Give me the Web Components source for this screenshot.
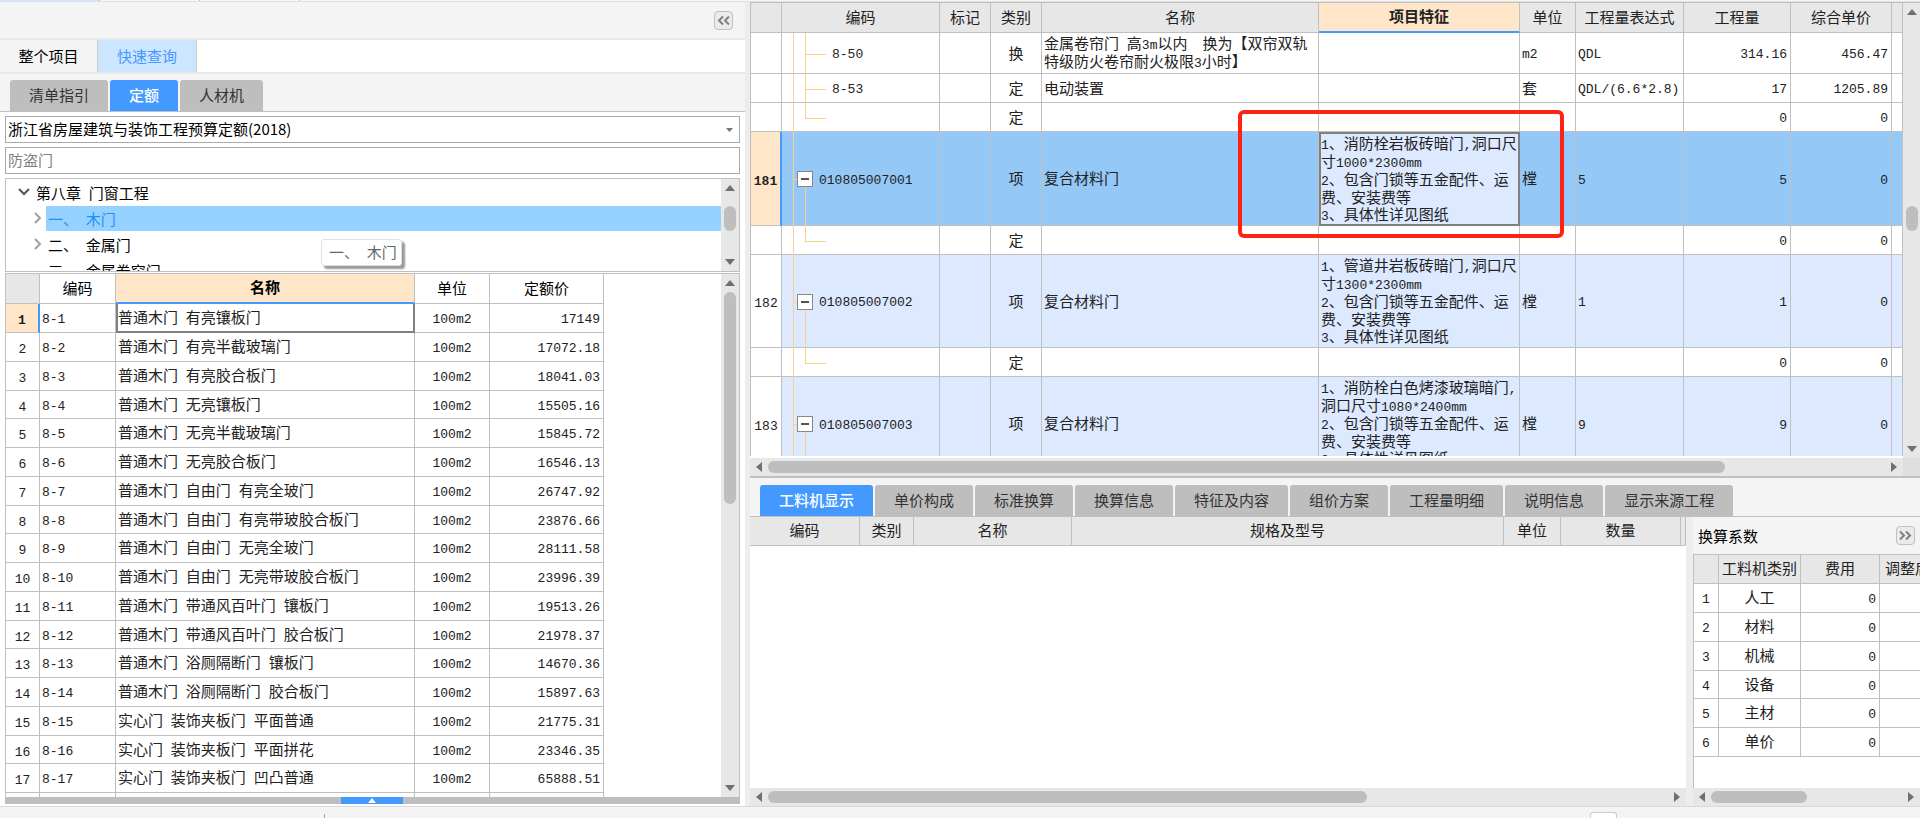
<!DOCTYPE html>
<html lang="zh-CN">
<head>
<meta charset="utf-8">
<title>预算编制</title>
<style>
html,body{margin:0;height:100%}
body{font:15px/20px "Noto Sans CJK SC",sans-serif;color:#222;background:#f4f4f4;overflow:hidden;
--line:#c0c0c0;--blue:#4499ff;--peach:#ffe6c8;--head:#e7e7e7;--panel:#f4f4f4;--mono:"Liberation Mono","Noto Sans CJK SC",monospace}
</style>
</head>
<body>
<budget-app></budget-app>
<script>
const define = (name, css, html, setup) => {
  const tpl = document.createElement('template');
  tpl.innerHTML = `<style>*{box-sizing:border-box}${css}</style>${html}`;
  customElements.define(name, class extends HTMLElement {
    constructor() {
      super();
      this.attachShadow({mode: 'open'}).append(tpl.content.cloneNode(true));
    }
    connectedCallback() {
      if (setup && !this.ready) { this.ready = true; setup(this, this.shadowRoot); }
    }
  });
};

// Half-width characters are set in the monospaced face.
const mix = t => String(t).replace(/[\x20-\x7e]+/g, m => `<span class="a">${m}</span>`);
const MONO = '.a{font-family:var(--mono);font-size:13px;line-height:13px;white-space:pre}';

define('scroll-bar', `
:host{display:flex;flex:none;background:var(--head);width:18px;flex-direction:column;align-items:center;justify-content:space-between}
:host([horizontal]){width:auto;height:18px;flex-direction:row}
svg{display:block;flex:none;width:18px;height:18px;fill:#6e6e78}
.track{flex:1;width:12px}
.thumb{width:12px;height:var(--len);margin-top:var(--at,0);background:#bebebe;border-radius:6px}
:host([horizontal]) .track{width:auto;height:12px}
:host([horizontal]) .thumb{width:var(--len);max-width:100%;height:12px;margin:0 0 0 var(--at,0)}
:host([horizontal]) svg{transform:rotate(-90deg)}
`, `<svg viewBox="0 0 18 18"><path d="M4 12L9 6l5 6z"/></svg><div class="track"><div class="thumb"></div></div><svg viewBox="0 0 18 18"><path d="M4 6l5 6 5-6z"/></svg>`);

define('fold-button', `
:host{display:block;flex:none}
button{display:block;width:19px;height:19px;padding:0;border:1px solid #c0c0c0;border-radius:4px;background:#ebebeb}
svg{display:block;width:17px;height:17px;fill:none;stroke:#808080;stroke-width:2}
:host([right]) svg{transform:scaleX(-1)}
`, `<button type="button" aria-label="折叠"><svg viewBox="0 0 17 17"><path d="M8 4.500L4 8.500l4 4M14 4.500l-4 4 4 4"/></svg></button>`);

define('tab-strip', `
:host{display:flex;gap:2px;padding:0 10px;border-bottom:1px solid var(--line);background:var(--panel)}
button{font:inherit;height:31px;padding:0 19px 2px;border:0;border-radius:3px 3px 0 0;background:#bebebe;color:#333;white-space:nowrap}
button.on{background:var(--blue);color:#fff;font-weight:500}
`, ``, (el, root) => {
  el.getAttribute('tabs').split(',').forEach((t, i) => {
    const b = document.createElement('button');
    b.type = 'button'; b.textContent = t;
    if (i == el.getAttribute('active')) b.className = 'on';
    root.append(b);
  });
});

define('tree-view', `
:host{display:flex;height:94px;border:1px solid var(--line);background:#fff;color:#000}
ul{list-style:none;margin:0;padding:0;flex:1;overflow:hidden}
li{display:flex;align-items:center;gap:2px;height:26px;padding-left:26px}
li.root{gap:4px;padding-left:12px}
svg{width:12px;height:12px;flex:none;fill:none;stroke:#a0a0a0;stroke-width:2}
.root svg{stroke:#555}
span.t{flex:1;height:25px;line-height:25px;padding-left:2px;white-space:pre}
li.on span.t{background:#96d2ff;color:#1a90ff}
.tip{position:absolute;left:321px;top:239px;width:81px;height:27px;line-height:24px;padding-left:7px;background:#fff;color:#666;border:1px solid #e0e0e0;border-radius:3px;box-shadow:3px 3px 2px #999}
scroll-bar{--at:9px;--len:25px}
${MONO}`, `<ul>
<li class="root"><svg viewBox="0 0 12 12"><path d="M1 3l5 5 5-5"/></svg><span class="t">${mix('第八章 门窗工程')}</span></li>
<li class="on"><svg viewBox="0 0 12 12"><path d="M3 1l5 5-5 5"/></svg><span class="t">${mix('一、 木门')}</span></li>
<li><svg viewBox="0 0 12 12"><path d="M3 1l5 5-5 5"/></svg><span class="t">${mix('二、 金属门')}</span></li>
<li><svg viewBox="0 0 12 12"></svg><span class="t">${mix('三、 金属卷帘门')}</span></li>
</ul><scroll-bar></scroll-bar><div class="tip" role="tooltip">${mix('一、 木门')}</div>`);

const TABLE = `
table{border-collapse:separate;border-spacing:0;table-layout:fixed}
th,td{padding:0 2px 2px;border:0 solid var(--line);border-width:0 1px 1px 0;font-weight:400;text-align:left;white-space:nowrap;overflow:hidden}
th{background:var(--head);text-align:center}
.c{text-align:center}.r{text-align:right;padding-right:3px}
${MONO}`;

const quota = [['普通木门 有亮镶板门','17149'],['普通木门 有亮半截玻璃门','17072.18'],['普通木门 有亮胶合板门','18041.03'],['普通木门 无亮镶板门','15505.16'],['普通木门 无亮半截玻璃门','15845.72'],['普通木门 无亮胶合板门','16546.13'],['普通木门 自由门 有亮全玻门','26747.92'],['普通木门 自由门 有亮带玻胶合板门','23876.66'],['普通木门 自由门 无亮全玻门','28111.58'],['普通木门 自由门 无亮带玻胶合板门','23996.39'],['普通木门 带通风百叶门 镶板门','19513.26'],['普通木门 带通风百叶门 胶合板门','21978.37'],['普通木门 浴厕隔断门 镶板门','14670.36'],['普通木门 浴厕隔断门 胶合板门','15897.63'],['实心门 装饰夹板门 平面普通','21775.31'],['实心门 装饰夹板门 平面拼花','23346.35'],['实心门 装饰夹板门 凹凸普通','65888.51']];

define('quota-table', `
:host{display:flex;flex:1;min-height:0;border:1px solid var(--line);border-bottom:0;background:#fff}
.view{flex:1;overflow:hidden}
${TABLE}
table{width:598px}
tr{height:29px}
tbody tr:nth-child(4n){height:28px}
thead tr{height:30px}
th{background:#fff;color:#000}
th.idx{background:var(--head)}
th.sel{background:var(--peach);font-weight:700;border-bottom:2px solid var(--blue)}
td:first-child{padding-bottom:0}
td.now{background:var(--peach);font-weight:700;border-right:2px solid var(--blue)}
td.focus{border:2px solid #808080;border-top:0;padding-left:0}
scroll-bar{--len:212px}
`, `<div class="view"><table><colgroup><col style="width:34px"><col style="width:76px"><col style="width:299px"><col style="width:75px"><col style="width:114px"></colgroup>
<thead><tr><th class="idx"></th><th>编码</th><th class="sel">名称</th><th>单位</th><th>定额价</th></tr></thead><tbody>
${quota.map(([n,p],i)=>`<tr><td class="c${i?'':' now'}">${mix(i+1)}</td><td>${mix('8-'+(i+1))}</td><td${i?'':' class="focus"'}>${mix(n)}</td><td class="c">${mix('100m2')}</td><td class="r">${mix(p)}</td></tr>`).join('')}
<tr><td></td><td></td><td></td><td></td><td></td></tr></tbody></table></div><scroll-bar></scroll-bar>`);

define('query-panel', `
:host{display:flex;flex-direction:column;min-width:0;min-height:0;background:#fff}
header{display:flex;justify-content:flex-end;align-items:center;height:36px;padding:0 12px 0 0;background:var(--panel)}
nav{display:flex;height:36px;border:solid #e7e7e7;border-width:2px 0;background:#fff}
nav button{font:inherit;width:98px;padding:0;border:0;border-right:1px solid #ccc;background:var(--panel);color:#000}
nav button.on{width:99px;background:#cce6ff;color:var(--blue)}
tab-strip{padding-top:6px}
.body{display:flex;flex-direction:column;flex:1;min-height:0;gap:4px;padding:4px 5px 0}
.pick{display:grid}
select,input{grid-area:1/1;appearance:none;font:inherit;width:100%;height:27px;padding:0 2px 2px;margin:0;border:1px solid #aaa;border-radius:0;background:#fff;color:#000;outline:0}
input{color:#808080}
.pick svg{grid-area:1/1;place-self:center end;width:20px;height:6px;fill:#777;pointer-events:none}
.lists{display:flex;flex-direction:column;flex:1;min-height:0;gap:1px}
.drawer{height:7px;margin:0 5px 2px;background:#bebebe}
.drawer button{display:block;width:62px;height:7px;margin-left:336px;padding:0;border:0;background:var(--blue)}
.drawer svg{display:block;margin:auto;width:8px;height:5px;fill:#fff}
`, `<header><fold-button></fold-button></header>
<nav><button type="button">整个项目</button><button type="button" class="on">快速查询</button></nav>
<tab-strip tabs="清单指引,定额,人材机" active="1"></tab-strip>
<div class="body"><div class="pick"><select aria-label="定额库"><option>浙江省房屋建筑与装饰工程预算定额(2018)</option></select><svg viewBox="0 0 20 6"><path d="M6 1h7L9.500 5z"/></svg></div>
<input type="text" aria-label="搜索" value="防盗门">
<div class="lists"><tree-view></tree-view><quota-table></quota-table></div></div>
<div class="drawer"><button type="button" aria-label="展开"><svg viewBox="0 0 8 5"><path d="M0 5L4 0l4 5z"/></svg></button></div>`);

// Tree guides of the code column: outer rail, inner rail and the branch of one row.
define('tree-mark', `
:host{position:absolute;inset:0 0 -1px;pointer-events:none}
i{position:absolute;background:#ffcf8c}
.rail{left:11px;top:0;bottom:0;width:1px}
.in{left:23px;top:0;bottom:0;width:1px}
.arm{left:23px;top:50%;width:21px;height:1px}
:host([kind=last]) .in{bottom:50%}
:host([kind=box]) .in{top:50%}
:host([kind=box]) .arm{left:11px;width:6px}
b{display:none;position:absolute;left:15px;top:calc(50% - 8px);width:16px;height:16px;border:1px solid #888;background:#fff}
b::after{content:"";position:absolute;left:3px;right:3px;top:6px;height:2px;background:#555}
:host([kind=box]) b{display:block}
`, `<i class="rail"></i><i class="in"></i><i class="arm"></i><b></b>`);

const tail = ['last','','','定','','','','','0','0'];
const tails = '2、包含门锁等五金配件、运\n费、安装费等\n3、具体性详见图纸';
const items = [
 ['mid','','8-50','换','金属卷帘门 高3m以内　换为【双帘双轨\n特级防火卷帘耐火极限3小时】','','m2','QDL','314.16','456.47',41],
 ['mid','','8-53','定','电动装置','','套','QDL/(6.6*2.8)','17','1205.89',29],
 [...tail,29],
 ['box','181','010805007001','项','复合材料门','1、消防栓岩板砖暗门,洞口尺\n寸1000*2300mm\n'+tails,'樘','5','5','0',94],
 [...tail,29],
 ['box','182','010805007002','项','复合材料门','1、管道井岩板砖暗门,洞口尺\n寸1300*2300mm\n'+tails,'樘','1','1','0',93],
 [...tail,29],
 ['box','183','010805007003','项','复合材料门','1、消防栓白色烤漆玻璃暗门,\n洞口尺寸1080*2400mm\n'+tails,'樘','9','9','0',94]];

define('bill-table', `
:host{display:grid;grid-template:minmax(0,1fr) 18px/minmax(0,1fr) 17px;background:#fff;border:solid var(--line);border-width:1px 0 2px}
.view{overflow:hidden;border-left:1px solid var(--line);margin-bottom:2px}
${TABLE}
table{width:100%}
thead tr{height:30px}
th.sel{background:var(--peach);font-weight:700;border-bottom:2px solid var(--blue)}
td{white-space:pre;line-height:17px}
td.idx{background:#fff;padding:0}
td.code{position:relative;padding-left:50px;overflow:visible}
tr.item td.code{padding-left:37px}
tr.item td:not(.idx){background:#dce9ff}
tr.cur td:not(.idx){background:#93c8f7}
tr.cur td.idx{background:var(--peach);font-weight:700;border-right:2px solid var(--blue)}
tr.cur td.feat{position:relative;overflow:visible;background:#dce9ff;border:2px solid #808080;padding:0 0 1px}
.mark{position:absolute;inset:-24px -46px -14px -83px;border:4px solid #ff2314;border-radius:6px;z-index:2;pointer-events:none}
.corner{background:#dedede}
.v{--at:185px;--len:25px;width:17px}.h{--len:957px}
`, `<div class="view"><table><colgroup><col style="width:31px"><col style="width:158px"><col style="width:51px"><col style="width:51px"><col><col style="width:201px"><col style="width:56px"><col style="width:108px"><col style="width:107px"><col style="width:101px"><col style="width:11px"></colgroup>
<thead><tr><th></th><th>编码</th><th>标记</th><th>类别</th><th>名称</th><th class="sel">项目特征</th><th>单位</th><th>工程量表达式</th><th>工程量</th><th>综合单价</th><th></th></tr></thead><tbody>
${items.map(r=>`<tr class="${r[1]?'item':''}${r[1]=='181'?' cur':''}" style="height:${r[10]}px"><td class="idx c">${mix(r[1])}</td><td class="code"><tree-mark kind="${r[0]}"></tree-mark>${mix(r[2])}</td><td></td><td class="c">${r[3]}</td><td>${mix(r[4])}</td><td class="feat">${mix(r[5])}${r[1]=='181'?'<div class="mark"></div>':''}</td><td>${mix(r[6])}</td><td>${mix(r[7])}</td><td class="r">${mix(r[8])}</td><td class="r">${mix(r[9])}</td><td></td></tr>`).join('')}
</tbody></table></div><scroll-bar class="v"></scroll-bar><scroll-bar class="h" horizontal></scroll-bar><div class="corner"></div>`);

define('resource-table', `
:host{display:flex;flex-direction:column;min-width:0;background:#fff}
.view{flex:1;overflow:hidden}
${TABLE}
table{width:100%}tr{height:29px}
scroll-bar{--len:599px}
`, `<div class="view"><table><colgroup><col style="width:110px"><col style="width:54px"><col style="width:158px"><col><col style="width:57px"><col style="width:120px"><col style="width:5px"></colgroup><thead><tr><th>编码</th><th>类别</th><th>名称</th><th>规格及型号</th><th>单位</th><th>数量</th><th></th></tr></thead></table></div><scroll-bar horizontal></scroll-bar>`);

define('factor-panel', `
:host{display:flex;flex-direction:column;min-width:0;background:#fff}
header{display:flex;align-items:center;justify-content:space-between;height:37px;padding:0 5px;color:#000;background:var(--panel)}
.view{flex:1;overflow:hidden;border:solid var(--line);border-width:1px 0 0 1px}
${TABLE}
table{width:272px}tr{height:29px}tbody tr:nth-child(4n){height:28px}
th:last-child{text-align:left;padding-left:5px}
scroll-bar{--len:96px}
`, `<header><span>换算系数</span><fold-button right></fold-button></header>
<div class="view"><table><colgroup><col style="width:25px"><col style="width:82px"><col style="width:79px"><col style="width:86px"></colgroup><thead><tr><th></th><th>工料机类别</th><th>费用</th><th>调整后费用</th></tr></thead><tbody>
${['人工','材料','机械','设备','主材','单价'].map((n,i)=>`<tr><td class="c">${mix(i+1)}</td><td class="c">${n}</td><td class="r">${mix('0')}</td><td></td></tr>`).join('')}</tbody></table></div><scroll-bar horizontal></scroll-bar>`);

define('budget-app', `
:host{display:flex;flex-direction:column;height:100vh}
.top{display:flex;height:2px;border-bottom:1px solid #e0e0e0;background:#f7f7f7}
.top i{width:100px;border-right:1px solid #bbb}.top i:first-child{background:#cce6ff}
main{flex:1;min-height:0;display:grid;grid-template-columns:745px minmax(0,1fr);column-gap:5px;background:#ededed}
.right{display:flex;flex-direction:column;min-width:0;min-height:0}
bill-table{flex:none;box-sizing:border-box;height:round(58.2vh,1px)}
bill-table+tab-strip{padding-top:7px}
.low{flex:1;min-height:0;display:grid;grid-template-columns:minmax(0,1fr) 227px;column-gap:7px;background:#ededed}
footer{display:flex;height:12px;border-top:1px solid #d9d9d9;background:var(--panel);align-items:flex-end;justify-content:space-between;padding:0 303px 0 324px}
footer i{width:1px;height:4px;background:#aaa}
footer b{width:27px;height:6px;border:1px solid #ccc;border-bottom:0;border-radius:3px 3px 0 0;background:#fff}
`, `<div class="top"><i></i><i></i><i></i></div>
<main><query-panel></query-panel><div class="right"><bill-table></bill-table>
<tab-strip tabs="工料机显示,单价构成,标准换算,换算信息,特征及内容,组价方案,工程量明细,说明信息,显示来源工程" active="0"></tab-strip>
<div class="low"><resource-table></resource-table><factor-panel></factor-panel></div></div></main>
<footer><i></i><b></b></footer>`);
</script>
</body>
</html>
